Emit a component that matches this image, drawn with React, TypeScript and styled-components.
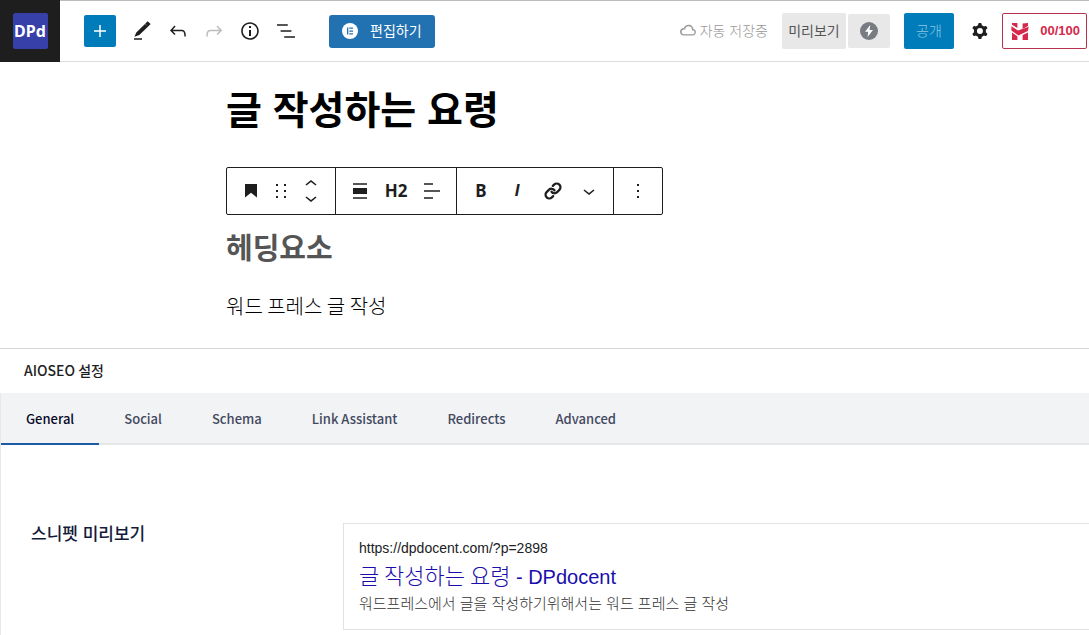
import React from 'react';
import styled, { createGlobalStyle } from 'styled-components';
import { Link as LinkIcon } from 'lucide-react';

const GlobalStyle = createGlobalStyle`
  *, *::before, *::after { box-sizing: border-box; }
  body {
    margin: 0;
    background: #fff;
    color: #1e1e1e;
    font-family: "Liberation Sans", "Noto Sans CJK KR", sans-serif;
    font-size: 14px;
    line-height: 20px;
  }
  h1, h2, h3, p { margin: 0; }
  button { font-family: inherit; font-size: inherit; line-height: inherit; color: inherit; cursor: pointer; }
  svg { display: block; flex: none; }
`;

const Header = styled.header`
  display: flex;
  align-items: center;
  justify-content: space-between;
  height: 62px;
  padding-right: 2px;
  border-top: 1px solid #bcbcbc;
  border-bottom: 1px solid #dcdcdc;
`;

const HeaderSide = styled.div`
  display: flex;
  align-items: center;
`;

const SiteLink = styled.a`
  display: flex;
  align-items: center;
  justify-content: center;
  width: 60px;
  height: 62px;
  background: #1e1e1e;
  text-decoration: none;
`;

const SiteMark = styled.span`
  width: 35px;
  height: 36px;
  border-radius: 2px;
  background: #3640a8;
  color: #fff;
  font: 700 16px/36px "Noto Sans", sans-serif;
  text-align: center;
`;

const Tools = styled.div`
  display: flex;
  align-items: center;
  gap: 4px;
  margin-left: 24px;
`;

const IconButton = styled.button<{ $muted?: boolean; $width?: number }>`
  display: flex;
  align-items: center;
  justify-content: center;
  width: ${(p) => p.$width ?? 32}px;
  height: 32px;
  padding: 0;
  border: 0;
  background: none;
  color: ${(p) => (p.$muted ? '#bdbdbd' : '#1e1e1e')};
`;

const AddButton = styled(IconButton)`
  margin-right: 8px;
  border-radius: 2px;
  background: #007cba;
  color: #fff;
`;

const ToolIcons = styled.div`
  display: flex;
  gap: 4px;
  margin-left: -2px;
`;

const EditButton = styled.button`
  display: flex;
  align-items: center;
  gap: 12px;
  height: 33px;
  margin-left: 23px;
  padding: 0 13px;
  border: 0;
  border-radius: 3px;
  background: #2271b1;
  color: #fff;
`;

const SaveState = styled.span`
  display: flex;
  align-items: center;
  margin-right: 14px;
  color: #999;
  font-weight: 300;
`;

const GrayButton = styled.button<{ $width: number; $height: number }>`
  display: flex;
  align-items: center;
  justify-content: center;
  width: ${(p) => p.$width}px;
  height: ${(p) => p.$height}px;
  margin-right: 2px;
  padding: 0;
  border: 0;
  border-radius: 2px;
  background: #e8e8e8;
  color: #555;
`;

const PublishButton = styled.button`
  width: 50px;
  height: 36px;
  margin: 0 10px 0 12px;
  padding: 0;
  border: 0;
  border-radius: 2px;
  background: #007cba;
  color: #8cc6e2;
  font-weight: 300;
`;

const ScoreButton = styled.button`
  display: flex;
  align-items: center;
  justify-content: space-between;
  width: 85px;
  height: 36px;
  margin-left: 6px;
  padding: 0 6px 0 8px;
  border: 1px solid #b8324f;
  border-radius: 2px;
  background: #fff;
  color: #d5284c;
  font-size: 13px;
  font-weight: 700;
`;

const Canvas = styled.main`
  max-width: 637px;
  margin: 0 auto;
  padding: 21px 0 28px;
`;

const PostTitle = styled.h1`
  font-size: 39px;
  line-height: 56px;
  color: #000;
`;

const BlockToolbar = styled.div`
  display: inline-flex;
  height: 48px;
  margin-top: 28px;
  border: 1px solid #1e1e1e;
  border-radius: 2px;
  vertical-align: top;
`;

const ToolbarGroup = styled.div<{ $pad: number }>`
  display: flex;
  align-items: center;
  padding: 0 ${(p) => p.$pad}px;

  & + & { border-left: 1px solid #1e1e1e; }
`;

const TextButton = styled(IconButton)<{ $italic?: boolean }>`
  font-family: ${(p) => (p.$italic ? '"Liberation Sans"' : '"Noto Sans"')}, sans-serif;
  font-size: 17px;
  font-weight: 700;
  font-style: ${(p) => (p.$italic ? 'italic' : 'normal')};
`;

const Heading = styled.h2`
  margin-top: 14px;
  font-size: 29px;
  line-height: 40px;
  color: #555;
`;

const Paragraph = styled.p`
  margin-top: 23px;
  font-family: "Noto Sans CJK KR", sans-serif;
  font-size: 20px;
  font-weight: 300;
  line-height: 28px;
  color: #000;
`;

const MetaBox = styled.section`
  border-top: 1px solid #d8d8d8;
`;

const MetaTitle = styled.h2`
  padding: 11px 24px 13px;
  font: 500 14px/20px "Noto Sans CJK KR", sans-serif;
`;

const Tabs = styled.nav`
  display: flex;
  height: 52px;
  border-left: 1px solid #e8e8eb;
  border-bottom: 2px solid #e5e6e8;
  background: #f2f3f5;
`;

const Tab = styled.button<{ $active?: boolean }>`
  height: 52px;
  padding: 2px 25px 0;
  border: 0;
  border-bottom: 2px solid ${(p) => (p.$active ? '#1d5ba6' : 'transparent')};
  background: none;
  color: ${(p) => (p.$active ? '#050a28' : '#434960')};
  font: 500 13px/20px "Noto Sans CJK KR", sans-serif;
`;

const Panel = styled.div`
  display: grid;
  grid-template-columns: 312px 1fr;
  min-height: 190px;
  padding: 78px 0 6px 30px;
  border-left: 1px solid #e8e8eb;
`;

const PanelLabel = styled.h3`
  font-size: 17px;
  font-weight: 500;
  line-height: 24px;
  color: #141b38;
`;

const Snippet = styled.article`
  height: 107px;
  padding: 14px 15px;
  border: 1px solid #e2e2e4;
  border-right: 0;
`;

const SnippetUrl = styled.p`
  line-height: 20px;
  color: #202124;
`;

const SnippetTitle = styled.a`
  display: block;
  margin: 2px 0 3px;
  color: #1a0dab;
  font-size: 20px;
  line-height: 28px;
  text-decoration: none;
`;

const SnippetName = styled.span`
  font-family: "Noto Sans CJK KR", sans-serif;
  font-size: 22px;
  font-weight: 300;
`;

const SnippetText = styled.p`
  font-size: 15px;
  font-weight: 300;
  line-height: 20px;
  color: #333;
`;

const PATHS = {
  plus: 'M11.25 12.75V18h1.5v-5.25H18v-1.5h-5.25V6h-1.5v5.25H6v1.5z',
  pencil: 'm20.6 5.1-3-2.8-2.4 2.4 3 2.9zM15 4.9 6.3 13.4l-1.9 4.4 4.9-1.7 8.9-8.5zM4 19.2h8v1.5H4z',
  undo: 'M18.3 11.7c-.6-.6-1.4-.9-2.3-.9H6.7l2.9-3.3-1.1-1-4.5 5L8.5 16l1-1-2.7-2.7H16c.5 0 .9.2 1.3.5 1 1 1 3.4 1 4.5v.3h1.5v-.2c0-1.5 0-4.3-1.5-5.7z',
  redo: 'M15.6 6.5l-1.1 1 2.9 3.3H8c-.9 0-1.7.3-2.3.9-1.4 1.5-1.4 4.2-1.4 5.6v.2h1.5v-.3c0-1.1 0-3.5 1-4.5.3-.3.7-.5 1.3-.5h9.2L14.5 15l1.1 1.1 4.6-4.6-4.6-5z',
  info: 'M12 3.2c-4.8 0-8.8 3.9-8.8 8.8 0 4.8 3.9 8.8 8.8 8.8 4.8 0 8.8-3.9 8.8-8.8 0-4.8-4-8.8-8.8-8.8zm0 16c-4 0-7.2-3.3-7.2-7.2C4.8 8 8 4.8 12 4.8s7.2 3.3 7.2 7.2c0 4-3.2 7.2-7.2 7.2zM11 17h2v-6h-2v6zm0-8h2V7h-2v2z',
  list: 'M13.8 5.2H3v1.5h10.8V5.2zm-3.6 12v1.5H21v-1.5H10.2zm7.2-6H6.6v1.5h10.8v-1.5z',
  cloud: 'M17.3 10.1c0-2.5-2.1-4.4-4.8-4.4-2.2 0-4.1 1.4-4.6 3.3h-.2C5.7 9 4 10.7 4 12.8c0 2.1 1.7 3.8 3.7 3.8h9c1.8 0 3.2-1.5 3.2-3.3.1-1.6-1.1-2.9-2.6-3.2zm-.5 5.1h-9c-1.2 0-2.2-1.1-2.2-2.3s1-2.4 2.2-2.4h1.3l.3-1.1c.4-1.3 1.7-2.2 3.2-2.2 1.8 0 3.3 1.3 3.3 2.9v1.3l1.3.2c.8.1 1.4.9 1.4 1.8-.1 1-.9 1.8-1.8 1.8z',
  gear: 'M10.289 4.836A1 1 0 0111.275 4h1.306a1 1 0 01.987.836l.244 1.466c.787.26 1.503.679 2.108 1.218l1.393-.522a1 1 0 011.216.437l.653 1.13a1 1 0 01-.23 1.273l-1.148.944a6.025 6.025 0 010 2.435l1.149.946a1 1 0 01.23 1.272l-.653 1.13a1 1 0 01-1.216.437l-1.394-.522c-.605.54-1.32.958-2.108 1.218l-.244 1.466a1 1 0 01-.987.836h-1.306a1 1 0 01-.986-.836l-.244-1.466a5.995 5.995 0 01-2.108-1.218l-1.394.522a1 1 0 01-1.217-.436l-.653-1.131a1 1 0 01.23-1.272l1.149-.946a6.026 6.026 0 010-2.435l-1.148-.944a1 1 0 01-.23-1.272l.653-1.131a1 1 0 011.217-.437l1.393.522a5.994 5.994 0 012.108-1.218l.244-1.466zM14.929 12a3 3 0 11-6 0 3 3 0 016 0z',
  bookmark: 'M6 5v13.6l6-4.8 6 4.8V5z',
  drag: 'M7 5h2v2H7zM15 5h2v2h-2zM7 11h2v2H7zM15 11h2v2h-2zM7 17h2v2H7zM15 17h2v2h-2z',
  movers: 'M6.5 5.4 12 1l5.5 4.4-.9 1.2L12 3 7.5 6.6zM17.5 18.6 12 23l-5.5-4.4.9-1.2L12 21l4.5-3.6z',
  align: 'M5 4.2h14v1.5H5zM5 9h14v6H5zM5 18.3h14v1.5H5z',
  textLeft: 'M4 4.2h9v1.5H4zM4 11.2h16v1.5H4zM4 18.3h9v1.5H4z',
  down: 'M17.5 11.6L12 16l-5.5-4.4.9-1.2L12 14l4.5-3.6 1 1.2z',
  more: 'M11 5h2v2h-2zM11 11h2v2h-2zM11 17h2v2h-2z',
};

const Icon = ({ name, size = 24 }: { name: keyof typeof PATHS; size?: number }) => (
  <svg width={size} height={size} viewBox="0 0 24 24" fill="currentColor" fillRule="evenodd" aria-hidden="true">
    <path d={PATHS[name]} />
  </svg>
);

const ElementorMark = () => (
  <svg width="16" height="16" viewBox="0 0 16 16" aria-hidden="true">
    <circle cx="8" cy="8" r="8" fill="#fff" />
    <path d="M5 4.5h1.3v7H5zM7.3 4.5H11v1.3H7.3zM7.3 7.4H11v1.3H7.3zM7.3 10.2H11v1.3H7.3z" fill="#2271b1" />
  </svg>
);

const BoltMark = () => (
  <svg width="18" height="18" viewBox="0 0 18 18" aria-hidden="true">
    <circle cx="9" cy="9" r="9" fill="#787c82" />
    <path d="M10.2 3 5 9.8h3.2L7.6 15 13 8h-3.4z" fill="#fff" />
  </svg>
);

const ScoreMark = () => (
  <svg width="18" height="17" viewBox="0 0 18 17" fill="#d5284c" aria-hidden="true">
    <path d="M1 0h5.4v5L1 1.8zM11.6.6 17 0v3l-5.4 3z" />
    <path d="M.4 3.2 7 7.6 17.8 3.8 16.8 8 7.4 12.4.4 7.6z" />
    <path d="M1 9.6 6.4 13.2V17H1zM11.6 12 17 9.4V17h-5.4z" />
  </svg>
);

const TAB_NAMES = ['General', 'Social', 'Schema', 'Link Assistant', 'Redirects', 'Advanced'];

export default function App() {
  return (
    <>
      <GlobalStyle />
      <Header>
        <HeaderSide>
          <SiteLink href="#"><SiteMark>DPd</SiteMark></SiteLink>
          <Tools>
            <AddButton aria-label="추가"><Icon name="plus" /></AddButton>
            <ToolIcons>
              <IconButton aria-label="도구"><Icon name="pencil" /></IconButton>
              <IconButton aria-label="실행 취소"><Icon name="undo" /></IconButton>
              <IconButton aria-label="다시 실행" $muted><Icon name="redo" /></IconButton>
              <IconButton aria-label="상세"><Icon name="info" /></IconButton>
              <IconButton aria-label="목록 보기"><Icon name="list" /></IconButton>
            </ToolIcons>
            <EditButton><ElementorMark />편집하기</EditButton>
          </Tools>
        </HeaderSide>
        <HeaderSide>
          <SaveState><Icon name="cloud" />자동 저장중</SaveState>
          <GrayButton $width={64} $height={36}>미리보기</GrayButton>
          <GrayButton $width={42} $height={34} aria-label="AMP"><BoltMark /></GrayButton>
          <PublishButton>공개</PublishButton>
          <IconButton aria-label="설정"><Icon name="gear" /></IconButton>
          <ScoreButton><ScoreMark />00/100</ScoreButton>
        </HeaderSide>
      </Header>

      <Canvas>
        <PostTitle>글 작성하는 요령</PostTitle>
        <BlockToolbar role="toolbar">
          <ToolbarGroup $pad={9}>
            <IconButton $width={30} aria-label="제목"><Icon name="bookmark" /></IconButton>
            <IconButton $width={30} aria-label="끌기"><Icon name="drag" /></IconButton>
            <IconButton $width={30} aria-label="이동"><Icon name="movers" /></IconButton>
          </ToolbarGroup>
          <ToolbarGroup $pad={6}>
            <IconButton $width={36} aria-label="정렬"><Icon name="align" /></IconButton>
            <TextButton $width={36}>H2</TextButton>
            <IconButton $width={36} aria-label="텍스트 정렬"><Icon name="textLeft" /></IconButton>
          </ToolbarGroup>
          <ToolbarGroup $pad={6}>
            <TextButton $width={36}>B</TextButton>
            <TextButton $width={36} $italic>I</TextButton>
            <IconButton $width={36} aria-label="링크"><LinkIcon size={18} strokeWidth={3} /></IconButton>
            <IconButton $width={36} aria-label="더 보기"><Icon name="down" /></IconButton>
          </ToolbarGroup>
          <ToolbarGroup $pad={6}>
            <IconButton $width={36} aria-label="옵션"><Icon name="more" /></IconButton>
          </ToolbarGroup>
        </BlockToolbar>
        <Heading>헤딩요소</Heading>
        <Paragraph>워드 프레스 글 작성</Paragraph>
      </Canvas>

      <MetaBox>
        <MetaTitle>AIOSEO 설정</MetaTitle>
        <Tabs>
          {TAB_NAMES.map((name, i) => (
            <Tab key={name} $active={i === 0}>{name}</Tab>
          ))}
        </Tabs>
        <Panel>
          <PanelLabel>스니펫 미리보기</PanelLabel>
          <Snippet>
            <SnippetUrl>https://dpdocent.com/?p=2898</SnippetUrl>
            <SnippetTitle href="#"><SnippetName>글 작성하는 요령</SnippetName> - DPdocent</SnippetTitle>
            <SnippetText>워드프레스에서 글을 작성하기위해서는 워드 프레스 글 작성</SnippetText>
          </Snippet>
        </Panel>
      </MetaBox>
    </>
  );
}
